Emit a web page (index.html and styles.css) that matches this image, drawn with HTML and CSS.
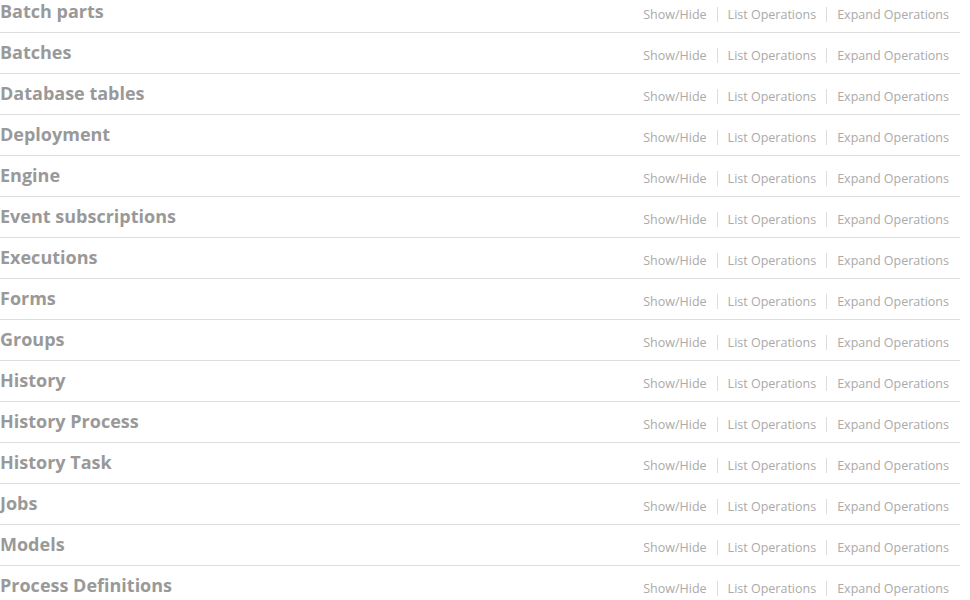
FILE: index.html
```html
<!DOCTYPE html>
<html>
<head>
<meta charset="utf-8">
<link rel="stylesheet" href="styles.css">
</head>
<body>
<ul class="resources">
  <li class="resource"><h2 class="title">Batch parts</h2><ul class="options"><li>Show/Hide</li><li>List Operations</li><li>Expand Operations</li></ul></li>
  <li class="resource"><h2 class="title">Batches</h2><ul class="options"><li>Show/Hide</li><li>List Operations</li><li>Expand Operations</li></ul></li>
  <li class="resource"><h2 class="title">Database tables</h2><ul class="options"><li>Show/Hide</li><li>List Operations</li><li>Expand Operations</li></ul></li>
  <li class="resource"><h2 class="title">Deployment</h2><ul class="options"><li>Show/Hide</li><li>List Operations</li><li>Expand Operations</li></ul></li>
  <li class="resource"><h2 class="title">Engine</h2><ul class="options"><li>Show/Hide</li><li>List Operations</li><li>Expand Operations</li></ul></li>
  <li class="resource"><h2 class="title">Event subscriptions</h2><ul class="options"><li>Show/Hide</li><li>List Operations</li><li>Expand Operations</li></ul></li>
  <li class="resource"><h2 class="title">Executions</h2><ul class="options"><li>Show/Hide</li><li>List Operations</li><li>Expand Operations</li></ul></li>
  <li class="resource"><h2 class="title">Forms</h2><ul class="options"><li>Show/Hide</li><li>List Operations</li><li>Expand Operations</li></ul></li>
  <li class="resource"><h2 class="title">Groups</h2><ul class="options"><li>Show/Hide</li><li>List Operations</li><li>Expand Operations</li></ul></li>
  <li class="resource"><h2 class="title">History</h2><ul class="options"><li>Show/Hide</li><li>List Operations</li><li>Expand Operations</li></ul></li>
  <li class="resource"><h2 class="title">History Process</h2><ul class="options"><li>Show/Hide</li><li>List Operations</li><li>Expand Operations</li></ul></li>
  <li class="resource"><h2 class="title">History Task</h2><ul class="options"><li>Show/Hide</li><li>List Operations</li><li>Expand Operations</li></ul></li>
  <li class="resource"><h2 class="title">Jobs</h2><ul class="options"><li>Show/Hide</li><li>List Operations</li><li>Expand Operations</li></ul></li>
  <li class="resource"><h2 class="title">Models</h2><ul class="options"><li>Show/Hide</li><li>List Operations</li><li>Expand Operations</li></ul></li>
  <li class="resource"><h2 class="title">Process Definitions</h2><ul class="options"><li>Show/Hide</li><li>List Operations</li><li>Expand Operations</li></ul></li>
</ul>
</body>
</html>
```
FILE: styles.css
```css
html, body {
  margin: 0;
  padding: 0;
  background: #fff;
  font-family: "Open Sans", "Noto Sans", sans-serif;
}
.resources {
  list-style: none;
  margin: -8px 0 0 0;
  padding: 0;
  width: 960px;
}
.resource {
  display: flex;
  align-items: flex-start;
  justify-content: space-between;
  height: 40px;
  border-bottom: 1px solid #ddd;
}
.title {
  margin: 0;
  padding: 7px 0 0 0;
  font-size: 18px;
  line-height: 24px;
  font-weight: 700;
  color: #999;
}
.options {
  display: flex;
  list-style: none;
  margin: 0;
  padding: 15px 11px 0 0;
  font-size: 12.5px;
  color: #aaa;
}
.options li {
  padding: 0 10px;
  border-right: 1px solid #ddd;
  line-height: 15px;
}
.options li:last-child {
  border-right: none;
  padding-right: 0;
}
```
